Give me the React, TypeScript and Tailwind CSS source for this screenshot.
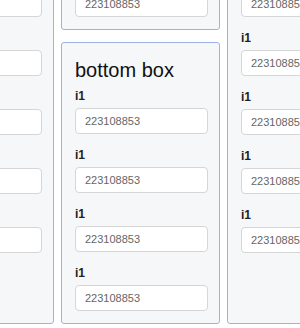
import React from "react";

const VALUE = "223108853";

function Field({ first }: { first?: boolean }) {
  return (
    <div className={first ? "" : "mt-[14px]"}>
      <label className="block text-[12px] leading-[14px] font-bold text-[#222]">i1</label>
      <input
        readOnly
        value={VALUE}
        className="mt-[5px] block w-full h-[26px] rounded-[4px] border border-[#d6d6d6] bg-white px-[9px] text-[11px] text-[#666] outline-none"
      />
    </div>
  );
}

function Box({ title, fields, grow }: { title: string; fields: number; grow?: boolean }) {
  return (
    <div
      className={`rounded-[3px] border border-[#9db1e6] bg-[#f6f7f9] pl-[13px] pr-[11px] pt-[16px] pb-[12px] ${grow ? "flex-1" : ""}`}
    >
      <h3 className="text-[20px] leading-[22px] text-[#111] mb-[8px]">{title}</h3>
      {Array.from({ length: fields }).map((_, i) => (
        <Field key={i} first={i === 0} />
      ))}
    </div>
  );
}

export default function App() {
  return (
    <div className="h-[328px] w-[300px] overflow-hidden bg-white" style={{ fontFamily: "'Liberation Sans', Arial, sans-serif" }}>
      <div className="flex gap-[7px] -mt-[75px] -ml-[105px] w-[491px]">
        {/* left column */}
        <div className="w-[159px] flex flex-col">
          <Box title="left box" fields={5} grow />
        </div>

        {/* middle column */}
        <div className="w-[159px] flex flex-col gap-[12px]">
          <Box title="top box" fields={1} />
          <Box title="bottom box" fields={4} />
        </div>

        {/* right column */}
        <div className="w-[159px] flex flex-col">
          <Box title="right box" fields={5} grow />
        </div>
      </div>
    </div>
  );
}
